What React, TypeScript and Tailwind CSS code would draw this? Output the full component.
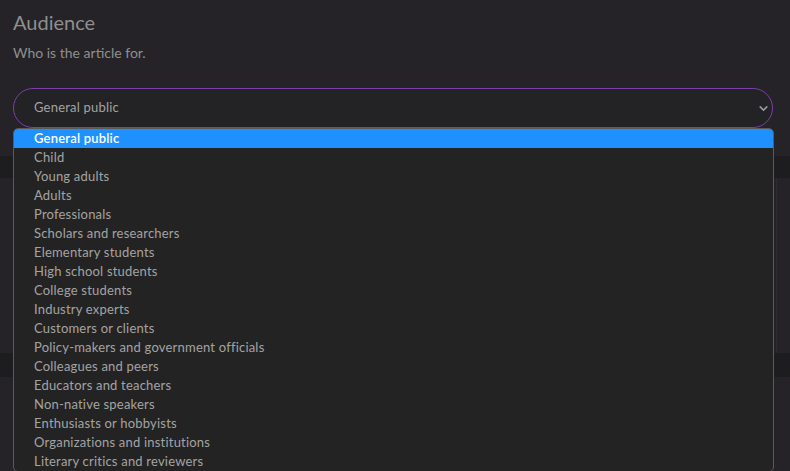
import { ChevronDown } from "lucide-react";

const audiences = [
  "General public",
  "Child",
  "Young adults",
  "Adults",
  "Professionals",
  "Scholars and researchers",
  "Elementary students",
  "High school students",
  "College students",
  "Industry experts",
  "Customers or clients",
  "Policy-makers and government officials",
  "Colleagues and peers",
  "Educators and teachers",
  "Non-native speakers",
  "Enthusiasts or hobbyists",
  "Organizations and institutions",
  "Literary critics and reviewers",
];

export default function App() {
  const selected = audiences[0];

  return (
    <div
      className="relative h-[471px] w-full overflow-hidden bg-[#252327] text-[#9a9a9a]"
      style={{ fontFamily: "Lato, 'Noto Sans', sans-serif" }}
    >
      {/* Audience field */}
      <div className="pl-[13px] pr-[17px] pt-[9px]">
        <h2 className="text-[20px] leading-[26px] text-[#8f8f8f]">Audience</h2>
        <p className="mt-[8px] text-[14px] leading-[20px] text-[#8f8f8f]">Who is the article for.</p>

        <div className="relative mt-[25px]">
          <div className="flex h-[40px] items-center justify-between rounded-full border border-[#7b3fa8] bg-[#232224] pl-[20px] pr-[2px]">
            <span className="text-[13px] tracking-[0.2px] text-[#a3a3a3]">{selected}</span>
            <ChevronDown className="h-[13px] w-[13px] text-[#9a9a9a]" strokeWidth={3} />
          </div>

          {/* open option list */}
          <ul className="absolute left-0 right-[-1px] top-[40px] z-10 overflow-hidden rounded-[5px] border border-[#5a5a5a] bg-[#232323]">
            {audiences.map((item) => (
              <li
                key={item}
                className={
                  item === selected
                    ? "h-[19px] bg-[#1e90ff] pl-[20px] text-[13px] leading-[19px] font-semibold tracking-[0.2px] text-white"
                    : "h-[19px] pl-[20px] text-[13px] leading-[19px] tracking-[0.2px] text-[#a3a3a3]"
                }
              >
                {item}
              </li>
            ))}
          </ul>
        </div>
      </div>

      {/* content behind the list */}
      <div className="mt-[28px] flex flex-col">
        <div className="h-[22px] bg-[#1d1c1f]" />
        <div className="mx-[13px] h-[175px] border-x border-[#2d2b30]" />
        <div className="h-[24px] bg-[#1d1c1f]" />
      </div>
    </div>
  );
}
